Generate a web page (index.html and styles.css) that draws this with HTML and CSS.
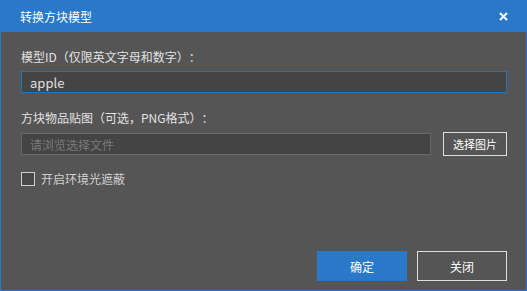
FILE: index.html
```html
<!DOCTYPE html>
<html lang="zh-CN">
<head>
  <meta charset="UTF-8" />
  <title>转换方块模型</title>
  <link rel="stylesheet" href="styles.css">
</head>
<body>
<div class="dialog">
  <div class="titlebar">
    <span class="title">转换方块模型</span>
    <svg class="close" width="9" height="9" viewBox="0 0 9 9">
      <path d="M1 1L8 8M8 1L1 8" stroke="#fff" stroke-width="2" />
    </svg>
  </div>
  <div class="content">
    <label class="field-label">模型ID（仅限英文字母和数字）：</label>
    <input class="text-input focused" type="text" value="apple">

    <label class="field-label second">方块物品贴图（可选，PNG格式）：</label>
    <div class="file-row">
      <input class="text-input" type="text" placeholder="请浏览选择文件" readonly>
      <button class="small-btn">选择图片</button>
    </div>

    <label class="check-row">
      <span class="checkbox"></span>
      <span>开启环境光遮蔽</span>
    </label>

    <div class="actions">
      <button class="btn primary">确定</button>
      <button class="btn outline">关闭</button>
    </div>
  </div>
</div>
</body>
</html>
```

FILE: styles.css
```css
* {
  box-sizing: border-box;
}
body {
  margin: 0;
  font-family: "Noto Sans CJK SC", "Noto Sans", sans-serif;
  background: #555;
  text-spacing-trim: space-all;
}
.dialog {
  width: 527px;
  height: 291px;
  border: 1px solid #2a79c9;
  border-top: none;
  background: #555;
  display: flex;
  flex-direction: column;
}
.titlebar {
  height: 32px;
  background: #2a79c9;
  display: flex;
  align-items: center;
  justify-content: space-between;
  padding: 0 19px 0 20px;
  margin: 0 -1px;
  color: #fff;
  font-size: 12px;
}
.title {
  line-height: 16px;
  margin-top: 1px;
}
.close {
  display: block;
}
.content {
  flex: 1;
  display: flex;
  flex-direction: column;
  padding: 17px 19px 9px 20px;
}
.field-label {
  font-size: 12px;
  line-height: 16px;
  color: #e2e2e2;
}
.field-label.second {
  margin-top: 17px;
}
.text-input {
  display: block;
  width: 100%;
  height: 22px;
  margin-top: 6px;
  padding: 0 8px;
  border: 1px solid #666;
  background: #444;
  color: #e0e0e0;
  font-family: inherit;
  font-size: 13px;
  outline: none;
}
.text-input.focused {
  border-color: #1b73c9;
}
.text-input::placeholder {
  color: #7a7a7a;
  font-size: 12px;
}
.file-row {
  display: flex;
  align-items: center;
  gap: 12px;
  margin-top: 6px;
}
.file-row .text-input {
  flex: 1;
  margin-top: 0;
}
.small-btn {
  width: 64px;
  height: 24px;
  flex: none;
  border: 1px solid #ddd;
  background: transparent;
  color: #fff;
  font-family: inherit;
  font-size: 11px;
  padding: 0;
}
.check-row {
  display: flex;
  align-items: center;
  gap: 6px;
  margin-top: 16px;
  font-size: 12px;
  line-height: 14px;
  color: #d0d0d0;
}
.checkbox {
  width: 14px;
  height: 14px;
  border: 1px solid #cfcfcf;
  background: #484848;
}
.actions {
  margin-top: auto;
  display: flex;
  justify-content: flex-end;
  gap: 10px;
}
.btn {
  width: 90px;
  height: 30px;
  font-family: inherit;
  font-size: 12px;
  color: #fff;
  padding: 0;
}
.btn.primary {
  background: #2a79c9;
  border: none;
}
.btn.outline {
  background: transparent;
  border: 1px solid #ddd;
}
```
